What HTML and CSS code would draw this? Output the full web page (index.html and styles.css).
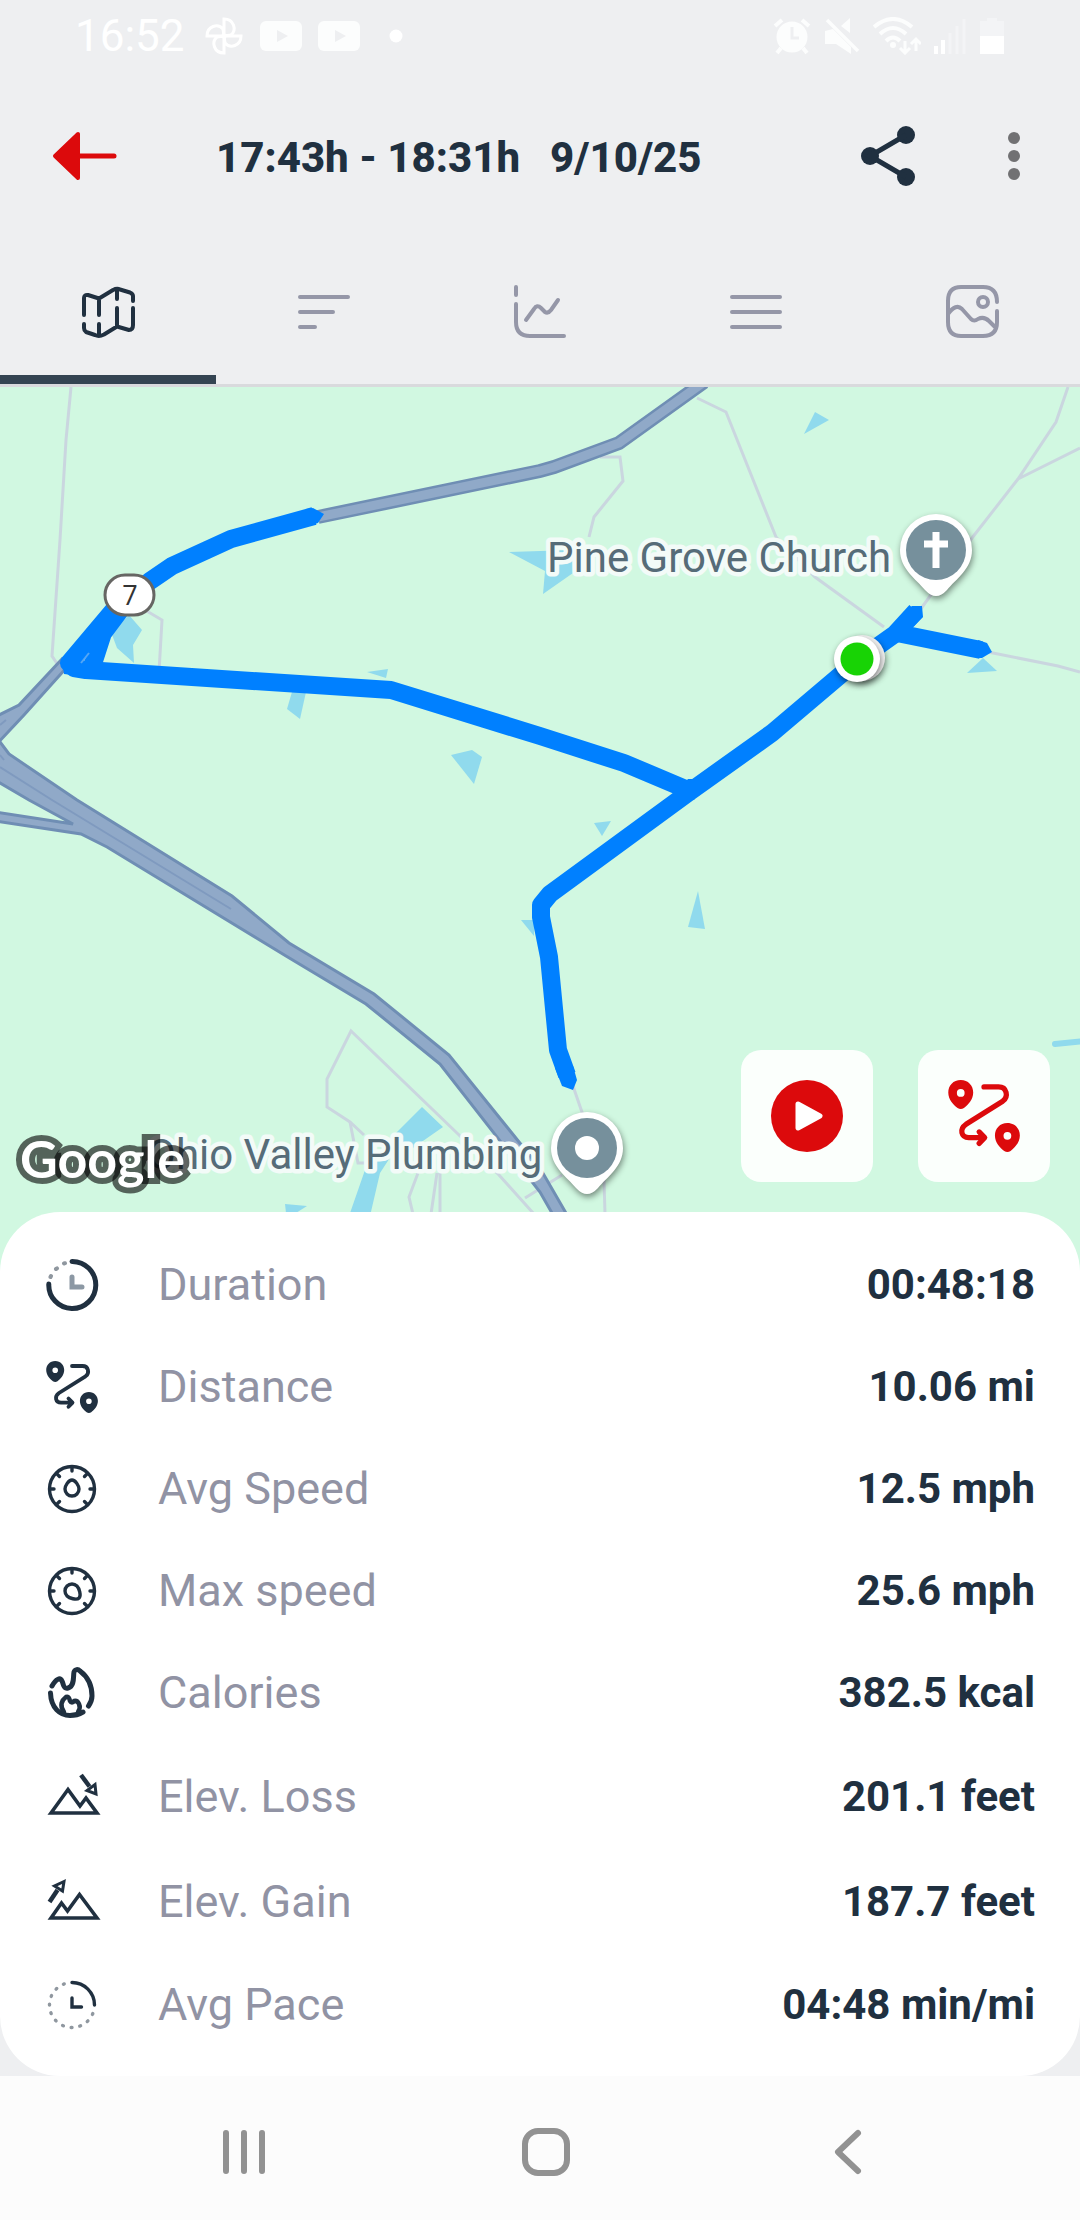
FILE: index.html
```html
<!DOCTYPE html>
<html lang="en">
<head>
<meta charset="utf-8">
<meta name="viewport" content="width=device-width, initial-scale=1">
<title>Workout route</title>
<link rel="stylesheet" href="styles.css">
</head>
<body>
<svg class="defs" aria-hidden="true">
  <symbol id="route" viewBox="0 0 52 52">
    <path fill="currentColor" fill-rule="evenodd" d="M9.200 0C14.600 0 18.200 4 18.200 9C18.200 14 14.500 18 11.500 20.200Q9.200 21.800 6.900 20.200C3.900 18 .2 14 .2 9C.2 4 3.800 0 9.200 0ZM9.200 6.500a2.800 2.800 0 1 0 0 5.600a2.800 2.800 0 1 0 0-5.600Z"/>
    <path fill="currentColor" fill-rule="evenodd" d="M42.900 31C48.300 31 51.900 35 51.900 40C51.900 45 48.200 49 45.200 51.200Q42.900 52.800 40.600 51.200C37.600 49 33.900 45 33.900 40C33.900 35 37.500 31 42.900 31ZM42.900 37.500a2.800 2.800 0 1 0 0 5.600a2.800 2.800 0 1 0 0-5.600Z"/>
    <path fill="none" stroke="currentColor" stroke-width="3.800" stroke-linecap="round" stroke-linejoin="round" d="M26 5H36.500C42.500 5 44 12 39.500 15.300L13 32C8 35.500 9.500 41.600 15 41.600H25M22.500 37.500L26.500 41.600L22.500 45.800"/>
  </symbol>
  <symbol id="gauge" viewBox="-30 -30 60 60">
    <g fill="none" stroke="currentColor" stroke-width="3.400" stroke-linecap="round">
      <circle r="22.500"/>
      <path d="M0-22V-18M22 0H18M-22 0H-18M15.600-15.600L12.500-12.500M-15.600-15.600L-12.500-12.500M15.600 15.600L12.500 12.500M-15.600 15.600L-12.500 12.500"/>
    </g>
  </symbol>
</svg>

<header>
  <div class="status">
    <div class="status-group">
      <span class="time">16:52</span>
      <svg width="40" height="40" viewBox="-20 -20 40 40"><g fill="none" stroke="#fff" stroke-width="3"><path d="M0 0V-17C10-17 13-6 7-1Z"/><path d="M0 0H17C17 10 6 13 1 7Z"/><path d="M0 0V17C-10 17-13 6-7 1Z"/><path d="M0 0H-17C-17-10-6-13-1-7Z"/></g></svg>
      <svg width="42" height="30" viewBox="0 0 42 30"><rect width="42" height="30" rx="6" fill="#fcfdfd"/><path d="M17 9L28 15L17 21Z" fill="#eeeff1"/></svg>
      <svg width="42" height="30" viewBox="0 0 42 30"><rect width="42" height="30" rx="6" fill="#fcfdfd"/><path d="M17 9L28 15L17 21Z" fill="#eeeff1"/></svg>
      <svg width="42" height="30" viewBox="0 0 42 30"><circle cx="20" cy="15" r="6.500" fill="#fff"/></svg>
    </div>
    <div class="status-group">
      <svg width="38" height="38" viewBox="0 0 38 38"><circle cx="19" cy="20" r="15.500" fill="#fcfdfd"/><path d="M2 9L9 3M29 3L36 9M8 31L4 36M30 31L34 36" stroke="#fcfdfd" stroke-width="4"/><path d="M19 10V21H26" fill="none" stroke="#eeeff1" stroke-width="3"/></svg>
      <svg width="36" height="38" viewBox="0 0 36 38"><path fill="#fcfdfd" d="M1 14L9 12L27 30V37L12 27H1ZM17 9L26 1V16Z"/><path d="M3 3L34 34" stroke="#fcfdfd" stroke-width="3.500"/></svg>
      <svg width="48" height="38" viewBox="0 0 48 38"><g fill="none" stroke="#fcfdfd" stroke-width="4"><path d="M1 10Q20-6 39 10M7 17Q20 5 33 17M13 24Q20 17 27 24"/><path stroke-width="3" d="M32 24V35M27 31L32 36L37 31M43 34V22M38 27L43 22L48 27"/></g><circle cx="20" cy="28" r="3" fill="#fcfdfd"/></svg>
      <svg width="32" height="38" viewBox="0 0 32 38"><path d="M2 29V37M9 23V37" stroke="#fff" stroke-width="4"/><path d="M16 16V37M23 9V37M30 2V37" stroke="#f3f4f6" stroke-width="3"/></svg>
      <svg width="26" height="38" viewBox="0 0 26 38"><path d="M1 4H8V1H18V4H25V19H1Z" fill="#f3f4f6"/><path d="M1 19H25V37H1Z" fill="#fff"/></svg>
    </div>
  </div>

  <div class="appbar">
    <button class="icon-btn back" aria-label="Back"><svg width="72" height="72" viewBox="0 0 72 72"><path d="M66 36H30" stroke="#dc0a0c" stroke-width="5" stroke-linecap="round"/><path d="M7 36L30 14V58Z" fill="#dc0a0c" stroke="#dc0a0c" stroke-width="4" stroke-linejoin="round"/></svg></button>
    <h1 class="title"><span>17:43h - 18:31h</span><span>9/10/25</span></h1>
    <button class="icon-btn" aria-label="Share"><svg width="72" height="72" viewBox="0 0 72 72"><g fill="#203040"><circle cx="54" cy="15" r="9"/><circle cx="18" cy="36" r="9"/><circle cx="54" cy="57" r="9"/></g><path d="M54 15L18 36L54 57" fill="none" stroke="#203040" stroke-width="5"/></svg></button>
    <button class="icon-btn" aria-label="More options"><svg width="72" height="72" viewBox="0 0 72 72" fill="#717173"><circle cx="36" cy="18" r="6"/><circle cx="36" cy="36" r="6"/><circle cx="36" cy="54" r="6"/></svg></button>
  </div>

  <div class="tabs" role="tablist">
    <button class="tab active" role="tab" aria-selected="true" aria-label="Map"><svg width="60" height="60" viewBox="0 0 60 60"><path d="M6 33V16Q6 12.500 10 13L21 16.500L35 8Q39 6 42 7.500L52 10.500Q55 12 55 14V19M21 18V33M39 8V17M39 26V44M55 26V43Q55 48 51 48L39 44.500L26 52.500Q21 55 17 53L8 50Q6 48.500 6 46V42M21 42V53"/></svg></button>
    <button class="tab" role="tab" aria-label="Splits"><svg width="60" height="60" viewBox="0 0 60 60"><path d="M6 15H54M6 30H39M6 45H21"/></svg></button>
    <button class="tab" role="tab" aria-label="Charts"><svg width="60" height="60" viewBox="0 0 60 60"><path d="M6 5V13M6 22V40Q6 54 20 54H54M16 38L24 27Q27 22 31 26L35 30Q38 32 41 28L48 18"/></svg></button>
    <button class="tab" role="tab" aria-label="Details"><svg width="60" height="60" viewBox="0 0 60 60"><path d="M6 15H54M6 30H54M6 45H54"/></svg></button>
    <button class="tab" role="tab" aria-label="Photos"><svg width="60" height="60" viewBox="0 0 60 60"><path d="M55 20Q55 5 41 5H19Q6 5 6 19V40Q6 54 19 54H41Q55 54 55 40V29M6 32Q14 21 20 27L29 37Q32 40 36 37Q42 34 47 39L53 45"/><circle cx="41" cy="20" r="5"/></svg></button>
  </div>
</header>

<main>
  <section class="map" aria-label="Route map">
    <svg class="map-canvas" viewBox="0 387 1080 883">
      <rect y="387" width="1080" height="883" fill="#d1f8e1"/>
      <g fill="#90daed">
        <path d="M509 552L572 550L573 573L543 594L545 571Z"/>
        <path d="M129 615L142 630L133 645L134 663L117 648L111 632Z"/>
        <path d="M367 672L388 669L386 678Z"/>
        <path d="M294 685H306V692L300 719L287 709Z"/>
        <path d="M451 755L472 750L482 757L474 784Z"/>
        <path d="M815 412L829 420L804 434Z"/>
        <path d="M983 658L997 671L967 673Z"/>
        <path d="M594 823L611 821L602 836Z"/>
        <path d="M698 891L705 929L688 927Z"/>
        <path d="M521 920H534V936Z"/>
        <path d="M422 1107L443 1127L410 1150L393 1153L380 1173L370 1216H349L365 1170L396 1133Z"/>
        <path d="M285 1204L307 1206L296 1213H286Z"/>
      </g>
      <path d="M1055 1044L1084 1041" stroke="#90daed" stroke-width="6" stroke-linecap="round"/>
      <g class="minor-roads">
        <path d="M71 387L66 440L60 540L52 656L60 668"/>
        <path d="M145 610L162 620L159 672"/>
        <path d="M697 398L726 412L776 537L815 577L884 627"/>
        <path d="M600 457H620L623 481L594 517L589 537"/>
        <path d="M1068 387L1056 422L1018 479L972 538L920 610M1018 479L1080 448"/>
        <path d="M988 652L1058 666L1080 672"/>
        <path d="M364 1135L350 1122L327 1107V1079L351 1031L458 1134L499 1175L534 1214"/>
        <path d="M350 1122L358 1163H372M525 1198L562 1175M418 1173L409 1197L413 1214M437 1173L431 1214M440 1173V1214"/>
        <path d="M573 1086L584 1118M604 1180L605 1214"/>
      </g>
      <path d="M318 517L540 471L554 467L619 443L704 382" fill="none" stroke="#6f8eb4" stroke-width="14"/>
      <path d="M318 517L540 471L554 467L619 443L704 382" fill="none" stroke="#90a9c8" stroke-width="9"/>
      <g fill="#90a9c8" stroke="#6f8eb4" stroke-width="3">
        <path d="M-5 717L19 705L62 659L68 666L24 715L-5 746Z"/>
        <path d="M-5 735L0 742L9 754L77 800L232 896L289 943L374 994L449 1055L540 1168L570 1220H556L540 1192L440 1064L366 1004L286 956L107 847L81 834L-5 821V812L73 824L29 800L-5 780Z"/>
      </g>
      <path d="M0 725L6 720M0 767L52 800L231 909M0 755L4 760" fill="none" stroke="#7f9abf" stroke-width="2"/>
      <g class="route-line">
        <path d="M314 516L231 539L172 566L150 581L112 612L69 663L74 668L86 670L391 690L540 736L624 763L688 790"/>
        <path d="M124 605L103 633L92 667"/>
        <path d="M916 611L895 634L857 661L772 733L688 793L550 894L541 905V917L549 957L558 1050L567 1075"/>
        <path d="M892 632L981 650"/>
      </g>
      <g fill="#0080ff">
        <path d="M306 509L313 508L324 514L318 523L308 526Z"/>
        <path d="M908 609L912 606H922L923 617L914 626Z"/>
        <path d="M978 640L987 643L992 652L982 658L976 658Z"/>
        <path d="M555 1068L573 1066L577 1080L573 1090L562 1086Z"/>
        <path d="M62 660L78 656L80 676L64 674Z"/>
        <path d="M676 792L688 779H696L706 780L694 800Z"/>
      </g>
      <path d="M81 663L89 653" stroke="#55a6f5" stroke-width="2"/>
      <rect x="105" y="575" width="49" height="40" rx="20" fill="#fff" stroke="#666663" stroke-width="3"/>
      <text class="shield" x="130" y="605">7</text>
      <text class="poi" x="547" y="572">Pine Grove Church</text>
      <text class="poi" x="147" y="1169">Ohio Valley Plumbing</text>
      <text class="google" x="20" y="1178">Google</text>
      <g class="pin">
        <path d="M936 514A36 36 0 0 1 972 550C972 569 956 579 947 590Q936 602 925 590C916 579 900 569 900 550A36 36 0 0 1 936 514Z" fill="#fff"/>
        <circle cx="936" cy="550" r="30" fill="#76909c"/>
        <path d="M936 532V568M924 544H948" stroke="#fff" stroke-width="7"/>
      </g>
      <g class="pin">
        <path d="M587 1112A36 36 0 0 1 623 1148C623 1167 607 1177 598 1188Q587 1200 576 1188C567 1177 551 1167 551 1148A36 36 0 0 1 587 1112Z" fill="#fff"/>
        <circle cx="587" cy="1148" r="30" fill="#76909c"/>
        <circle cx="587" cy="1148" r="12" fill="#fff"/>
      </g>
      <g class="pin"><circle cx="862" cy="658" r="23" fill="#f1f1f1"/></g>
      <g class="pin">
        <circle cx="857" cy="659" r="23" fill="#fff"/>
        <circle cx="857" cy="659" r="16.500" fill="#18d305"/>
      </g>
    </svg>
    <div class="map-actions">
      <button class="map-btn" aria-label="Play route"><svg width="72" height="72" viewBox="0 0 72 72"><circle cx="36" cy="36" r="36" fill="#dc0a0c"/><path d="M27 24L49 36L27 48Z" fill="#fff" stroke="#fff" stroke-width="5" stroke-linejoin="round"/></svg></button>
      <button class="map-btn" aria-label="Show route"><svg width="72" height="72"><use href="#route"/></svg></button>
    </div>
  </section>

  <dl class="stats">
    <div class="row">
      <svg width="60" height="60" viewBox="0 0 60 60" fill="none" stroke-linecap="round"><path d="M30 6.500A23.500 23.500 0 1 1 6.800 29" stroke="#203040" stroke-width="5"/><path d="M8.500 22L9 21M14 14L15 13.300M22 8.500L23 8.200" stroke="#8f979f" stroke-width="4"/><path d="M30 22V32H40" stroke="#8c98a4" stroke-width="5"/></svg>
      <dt>Duration</dt><dd>00:48:18</dd>
    </div>
    <div class="row">
      <svg width="60" height="60"><use href="#route" x="4" y="4" width="52" height="52"/></svg>
      <dt>Distance</dt><dd>10.06 mi</dd>
    </div>
    <div class="row">
      <svg width="60" height="60" viewBox="0 0 60 60"><use href="#gauge"/><path d="M30 21C33.500 21 37 27 37 30A7 7 0 0 1 23 30C23 27 26.500 21 30 21Z" fill="none" stroke="currentColor" stroke-width="3.400"/></svg>
      <dt>Avg Speed</dt><dd>12.5 mph</dd>
    </div>
    <div class="row">
      <svg width="60" height="60" viewBox="0 0 60 60"><use href="#gauge"/><path transform="rotate(135 30 30)" d="M30 20C33.500 20 37 27 37 30A7 7 0 0 1 23 30C23 27 26.500 20 30 20Z" fill="none" stroke="currentColor" stroke-width="3.400"/></svg>
      <dt>Max speed</dt><dd>25.6 mph</dd>
    </div>
    <div class="row">
      <svg width="60" height="60" viewBox="0 0 60 60" fill="none" stroke="currentColor" stroke-width="5" stroke-linecap="round" stroke-linejoin="round"><path d="M10 23C14 16 18 14 20 18C22 22 21 26 26 25C33 23 31 13 32 9C33 6 36 6 38 8C46 14 50 23 50 33Q50 38 46.500 43M8.500 30C9 45 18 52.500 28 52.500Q35 52.500 41 49"/><path stroke-width="4.500" d="M22 49C17 42 20 37 24 34C27 33 27.500 36 28 38C29 40 31 40 32 38C36 37 40 43 36 49"/></svg>
      <dt>Calories</dt><dd>382.5 kcal</dd>
    </div>
    <div class="row elevation">
      <svg width="60" height="60" viewBox="0 0 60 60" fill="none" stroke="currentColor" stroke-width="3.600"><path d="M9 46L26 22.500L38 39L44 31L55 46Z"/><path stroke-width="4.500" d="M39 8L47.500 19.500"/><path stroke-width="3" d="M53 17.500L54 27L45 23.500Z"/></svg>
      <dt>Elev. Loss</dt><dd>201.1 feet</dd>
    </div>
    <div class="row elevation">
      <svg width="60" height="60" viewBox="0 0 60 60" fill="none" stroke="currentColor" stroke-width="3.600"><path d="M9 46L19.500 31L25.500 39L37.500 22.500L55 46Z"/><path stroke-width="4.500" d="M7.500 30L15.500 18"/><path stroke-width="3" d="M22 9.500L12.500 14L20.500 19Z"/></svg>
      <dt>Elev. Gain</dt><dd>187.7 feet</dd>
    </div>
    <div class="row">
      <svg width="60" height="60" viewBox="0 0 60 60" fill="none" stroke-linecap="round"><circle cx="30" cy="30" r="22.500" stroke="#8f979f" stroke-width="3.400" pathLength="16" stroke-dasharray=".1 .9"/><path d="M30 7.500A22.500 22.500 0 0 1 52.500 30" stroke="#fff" stroke-width="6"/><path d="M30 7.500A22.500 22.500 0 0 1 52.500 30M30 23V32H39.500" stroke="#203040" stroke-width="3.400"/></svg>
      <dt>Avg Pace</dt><dd>04:48 min/mi</dd>
    </div>
  </dl>
</main>

<nav class="navbar">
  <button aria-label="Recent apps"><svg width="60" height="60" viewBox="0 0 60 60"><path d="M12 11V49M30 11V49M48 11V49"/></svg></button>
  <button aria-label="Home"><svg width="60" height="60" viewBox="0 0 60 60"><rect x="9" y="9" width="42" height="42" rx="13"/></svg></button>
  <button aria-label="Go back"><svg width="60" height="60" viewBox="0 0 60 60"><path d="M40 11L20 30L40 49"/></svg></button>
</nav>
</body>
</html>
```

FILE: styles.css
```css
* { box-sizing: border-box; }

body {
  margin: 0;
  background: #eeeff1;
  color: #203040;
  font-family: Roboto, "Liberation Sans", sans-serif;
}

svg { display: block; flex: none; }
.defs { position: absolute; width: 0; height: 0; }

button {
  display: flex;
  align-items: center;
  justify-content: center;
  padding: 0;
  border: 0;
  background: none;
  color: inherit;
}

/* status bar */
.status {
  display: flex;
  justify-content: space-between;
  align-items: center;
  height: 72px;
  padding: 0 75px;
}
.status-group { display: flex; align-items: center; gap: 16px; }
.status-group + .status-group { gap: 13px; }
.time { margin-right: 3px; color: #fff; font-size: 44px; line-height: 72px; }

/* title bar */
.appbar {
  display: flex;
  align-items: center;
  height: 168px;
  padding: 0 30px 0 48px;
  gap: 54px;
}
.back { margin-right: 42px; }
.title {
  display: flex;
  flex: 1;
  gap: 30px;
  margin: 0;
  padding-top: 4px;
  font-size: 42px;
  line-height: 48px;
  font-weight: 800;
  white-space: nowrap;
}

/* tabs */
.tabs { display: flex; border-bottom: 3px solid #d9dadd; }
.tab {
  flex: 1;
  height: 144px;
  border-top: 9px solid transparent;
  border-bottom: 9px solid transparent;
  color: #9597a8;
}
.tab.active { color: #203040; border-bottom-color: #344452; }
.tab svg {
  fill: none;
  stroke: currentColor;
  stroke-width: 4;
  stroke-linecap: round;
  stroke-linejoin: round;
}

/* map */
.map { position: relative; }
.map-canvas { width: 100%; height: auto; }
.minor-roads { fill: none; stroke: #cad6df; stroke-width: 3; }
.route-line { fill: none; stroke: #0080ff; stroke-width: 18; stroke-linejoin: round; }
.shield { font: 27px "Open Sans", sans-serif; fill: #333; text-anchor: middle; }
.poi {
  font-size: 42px;
  fill: #566c78;
  stroke: #f3fbf8;
  stroke-width: 9;
  stroke-linejoin: round;
  paint-order: stroke;
}
.google {
  font: 700 52px Lato, sans-serif;
  fill: #fff;
  stroke: rgba(0, 0, 0, .6);
  stroke-width: 12;
  paint-order: stroke;
}
.pin { filter: drop-shadow(1px 3px 3px rgba(0, 0, 0, .45)); }
.map-actions {
  position: absolute;
  right: 30px;
  bottom: 88px;
  display: flex;
  gap: 45px;
}
.map-btn {
  width: 132px;
  height: 132px;
  border-radius: 20px;
  background: rgba(255, 255, 255, .9);
  color: #dc0a0c;
}

/* statistics sheet */
.stats {
  position: relative;
  margin: -58px 0 0;
  padding: 22px 45px 20px 42px;
  border-radius: 60px;
  background: #fff;
}
.row {
  display: flex;
  align-items: center;
  height: 102px;
  line-height: 52px;
}
.row.elevation { height: 105px; }
.row dt { margin-left: 56px; font-size: 45px; color: #9193a4; }
.row dd { margin: 0 0 0 auto; font-size: 42px; font-weight: 700; }

/* system navigation */
.navbar {
  display: flex;
  height: 144px;
  padding: 0 81px 0 93px;
  background: #fcfcfc;
}
.navbar button { flex: 1; padding-top: 8px; }
.navbar svg {
  fill: none;
  stroke: #929292;
  stroke-width: 6;
  stroke-linecap: round;
  stroke-linejoin: round;
}
```
